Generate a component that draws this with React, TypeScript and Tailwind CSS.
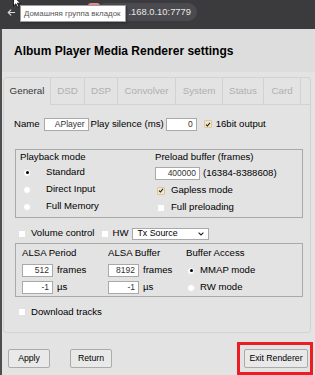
import React from "react";

const Check = ({ checked = false }: { checked?: boolean }) => (
  <span
    className={`inline-flex h-[8px] w-[8px] shrink-0 items-center justify-center rounded-[1px] border ${
      checked ? "border-[#d9c9a3] bg-[#f3e5c6]" : "border-[#e2e2e2] bg-white"
    }`}
  >
    {checked && (
      <svg width="7" height="7" viewBox="0 0 8 8">
        <path d="M1.4 4.3 L3.2 6 L6.6 1.8" fill="none" stroke="#1f1f1f" strokeWidth="1.4" />
      </svg>
    )}
  </span>
);

const Radio = ({ on = false }: { on?: boolean }) => (
  <span className="inline-flex h-[8px] w-[8px] shrink-0 items-center justify-center rounded-full border border-[#e4e4e4] bg-white">
    {on && <span className="h-[3px] w-[3px] rounded-full bg-black" />}
  </span>
);

const Field = ({ value, w }: { value: string; w: string }) => (
  <span
    className={`${w} inline-flex h-[13px] shrink-0 items-center justify-end border border-[#a9a9a9] bg-white pr-[3px] text-[8.5px] text-[#333]`}
  >
    {value}
  </span>
);

const Btn = ({ label, w }: { label: string; w: string }) => (
  <button
    className={`${w} h-[19px] shrink-0 rounded-[2px] border border-[#ababab] bg-[#e9e9e9] text-[8.7px] text-black`}
  >
    {label}
  </button>
);

const tabs = [
  { name: "General", w: "w-[47px]" },
  { name: "DSD", w: "w-[34px]" },
  { name: "DSP", w: "w-[33px]" },
  { name: "Convolver", w: "w-[58px]" },
  { name: "System", w: "w-[47px]" },
  { name: "Status", w: "w-[41px]" },
  { name: "Card", w: "w-[37px]" },
];

export default function App() {
  return (
    <div className="flex h-[375px] w-[315px] flex-col overflow-hidden bg-[#e3e3e3] font-['Liberation_Sans',Arial,sans-serif] text-black">
      {/* Browser chrome strip */}
      <div className="relative h-[29px] shrink-0 bg-[#3b3b3e] pt-[3px]">
        <div className="flex h-[18px] items-center pl-[7px]">
          <svg width="9" height="9" viewBox="0 0 10 10">
            <path d="M9 5H1.5 M4.6 1.8 L1.4 5 L4.6 8.2" fill="none" stroke="#d8d8d8" strokeWidth="1.3" />
          </svg>
          <div className="ml-[80px] flex h-[18px] w-[101px] items-center justify-end rounded-full bg-[#4b4b4f] pr-[6px] text-[9.4px] text-[#e6e6e6]">
            .168.0.10:7779
          </div>
        </div>
        <div className="absolute left-[88px] top-[3px] h-[5px] w-[12px] rounded-t-[3px] bg-[#e58a8f]" />
        {/* Tooltip */}
        <div className="absolute left-[20px] top-[5px] flex h-[17px] w-[106px] items-center border border-[#9d9d9d] bg-white px-[3px] text-[7.9px] text-[#555] shadow-[1px_1px_2px_rgba(0,0,0,0.3)]">
          Домашняя группа вкладок
        </div>
        <svg className="absolute left-[13px] top-[-4px]" width="9" height="12" viewBox="0 0 9 12">
          <path d="M0.5 0.5 L0.5 10 L2.8 7.8 L4.6 11.2 L6 10.5 L4.3 7.2 L7.6 7.2 Z" fill="#fff" stroke="#000" strokeWidth="0.8" />
        </svg>
      </div>

      {/* Page */}
      <div className="flex flex-1 flex-col border-l-2 border-[#4e4e4e]">
        {/* Dialog title */}
        <div className="flex h-[43px] shrink-0 items-center bg-[#dddddd] pl-[12px] text-[12px] font-bold">
          Album Player Media Renderer settings
        </div>

        <div className="flex flex-1 flex-col pl-[1px] pr-[4px] pt-[5px]">
          {/* Tabs */}
          <div className="flex h-[28px] shrink-0 rounded-t-[4px] border-l border-r border-t border-[#d2d2d2]">
            {tabs.map((t, i) => (
              <div
                key={t.name}
                className={`${t.w} flex items-center justify-center border-r border-[#d2d2d2] text-[9.8px] ${
                  i === 0 ? "text-[#3a3a3a]" : "border-b text-[#b0b0b0]"
                }`}
              >
                {t.name}
              </div>
            ))}
            <div className="flex-1 border-b border-[#d2d2d2]" />
          </div>

          {/* Tab panel */}
          <div className="flex h-[228px] shrink-0 flex-col rounded-b-[4px] border-b border-l border-r border-[#d2d2d2] pl-[10px] pt-[12px] text-[9.6px]">
            <div className="flex h-[14px] items-center">
              <span>Name</span>
              <span className="ml-[4px] flex">
                <Field value="APlayer" w="w-[45px]" />
              </span>
              <span className="ml-[2px]">Play silence (ms)</span>
              <span className="ml-[2px] flex">
                <Field value="0" w="w-[31px]" />
              </span>
              <span className="ml-[7px] flex">
                <Check checked />
              </span>
              <span className="ml-[4px]">16bit output</span>
            </div>

            {/* Playback / preload */}
            <div className="ml-[1px] mr-[7px] mt-[18px] flex h-[69px] border border-[#a9a9a9]">
              <div className="w-[139px] pl-[4px] pt-[1px]">
                <div className="h-[12px] leading-[12px]">Playback mode</div>
                <div className="mt-[1px]">
                  {["Standard", "Direct Input", "Full Memory"].map((l, i) => (
                    <div key={l} className="flex h-[17px] items-center">
                      <span className="ml-[3px] flex">
                        <Radio on={i === 0} />
                      </span>
                      <span className="ml-[15px]">{l}</span>
                    </div>
                  ))}
                </div>
              </div>
              <div className="flex-1 pt-[1px]">
                <div className="h-[12px] leading-[12px]">Preload buffer (frames)</div>
                <div className="mt-[2px] flex h-[17px] items-center">
                  <span className="flex">
                    <Field value="400000" w="w-[45px]" />
                  </span>
                  <span className="ml-[3px]">(16384-8388608)</span>
                </div>
                <div className="flex h-[17px] items-center">
                  <span className="ml-[2px] flex">
                    <Check checked />
                  </span>
                  <span className="ml-[6px]">Gapless mode</span>
                </div>
                <div className="flex h-[17px] items-center">
                  <span className="ml-[2px] flex">
                    <Check />
                  </span>
                  <span className="ml-[6px]">Full preloading</span>
                </div>
              </div>
            </div>

            {/* Volume row */}
            <div className="mt-[10px] flex h-[11px] items-center">
              <span className="ml-[4px] flex">
                <Check />
              </span>
              <span className="ml-[5px]">Volume control</span>
              <span className="ml-[7px] flex">
                <Check />
              </span>
              <span className="ml-[3px]">HW</span>
              <div className="ml-[4px] flex h-[12px] w-[77px] items-center justify-between border border-[#a9a9a9] bg-white pl-[4px] pr-[4px] text-[8.8px]">
                <span>Tx Source</span>
                <svg width="6" height="4" viewBox="0 0 6 4">
                  <path d="M0.6 0.6 L3 3 L5.4 0.6" fill="none" stroke="#222" strokeWidth="1.1" />
                </svg>
              </div>
            </div>

            {/* ALSA */}
            <div className="ml-[1px] mr-[7px] mt-[4px] flex h-[54px] border border-[#a9a9a9]">
              {[
                { title: "ALSA Period", v: "512", w: "w-[86px]" },
                { title: "ALSA Buffer", v: "8192", w: "w-[84px]" },
              ].map((c) => (
                <div key={c.title} className={`${c.w} pl-[6px] pt-[3px]`}>
                  <div className="h-[12px] leading-[12px]">{c.title}</div>
                  <div className="mt-[3px] flex h-[17px] items-center">
                    <span className="flex">
                      <Field value={c.v} w="w-[31px]" />
                    </span>
                    <span className="ml-[4px]">frames</span>
                  </div>
                  <div className="flex h-[17px] items-center">
                    <span className="flex">
                      <Field value="-1" w="w-[31px]" />
                    </span>
                    <span className="ml-[4px]">µs</span>
                  </div>
                </div>
              ))}
              <div className="flex-1 pt-[3px]">
                <div className="h-[12px] leading-[12px]">Buffer Access</div>
                <div className="mt-[3px] flex h-[17px] items-center">
                  <span className="ml-[1px] flex">
                    <Radio on />
                  </span>
                  <span className="ml-[5px]">MMAP mode</span>
                </div>
                <div className="flex h-[17px] items-center">
                  <span className="ml-[1px] flex">
                    <Radio />
                  </span>
                  <span className="ml-[5px]">RW mode</span>
                </div>
              </div>
            </div>

            <div className="mt-[9px] flex h-[12px] items-center">
              <span className="ml-[4px] flex">
                <Check />
              </span>
              <span className="ml-[5px]">Download tracks</span>
            </div>
          </div>

          {/* Footer buttons */}
          <div className="mt-[16px] flex items-start pl-[5px]">
            <Btn label="Apply" w="w-[42px]" />
            <span className="ml-[20px] flex">
              <Btn label="Return" w="w-[42px]" />
            </span>
            <div className="-mr-[2px] -mt-[7px] ml-auto flex border-[3px] border-[#ec1c24] pb-[4px] pl-[4px] pr-[2px] pt-[4px]">
              <Btn label="Exit Renderer" w="w-[64px]" />
            </div>
          </div>
        </div>
      </div>
    </div>
  );
}
